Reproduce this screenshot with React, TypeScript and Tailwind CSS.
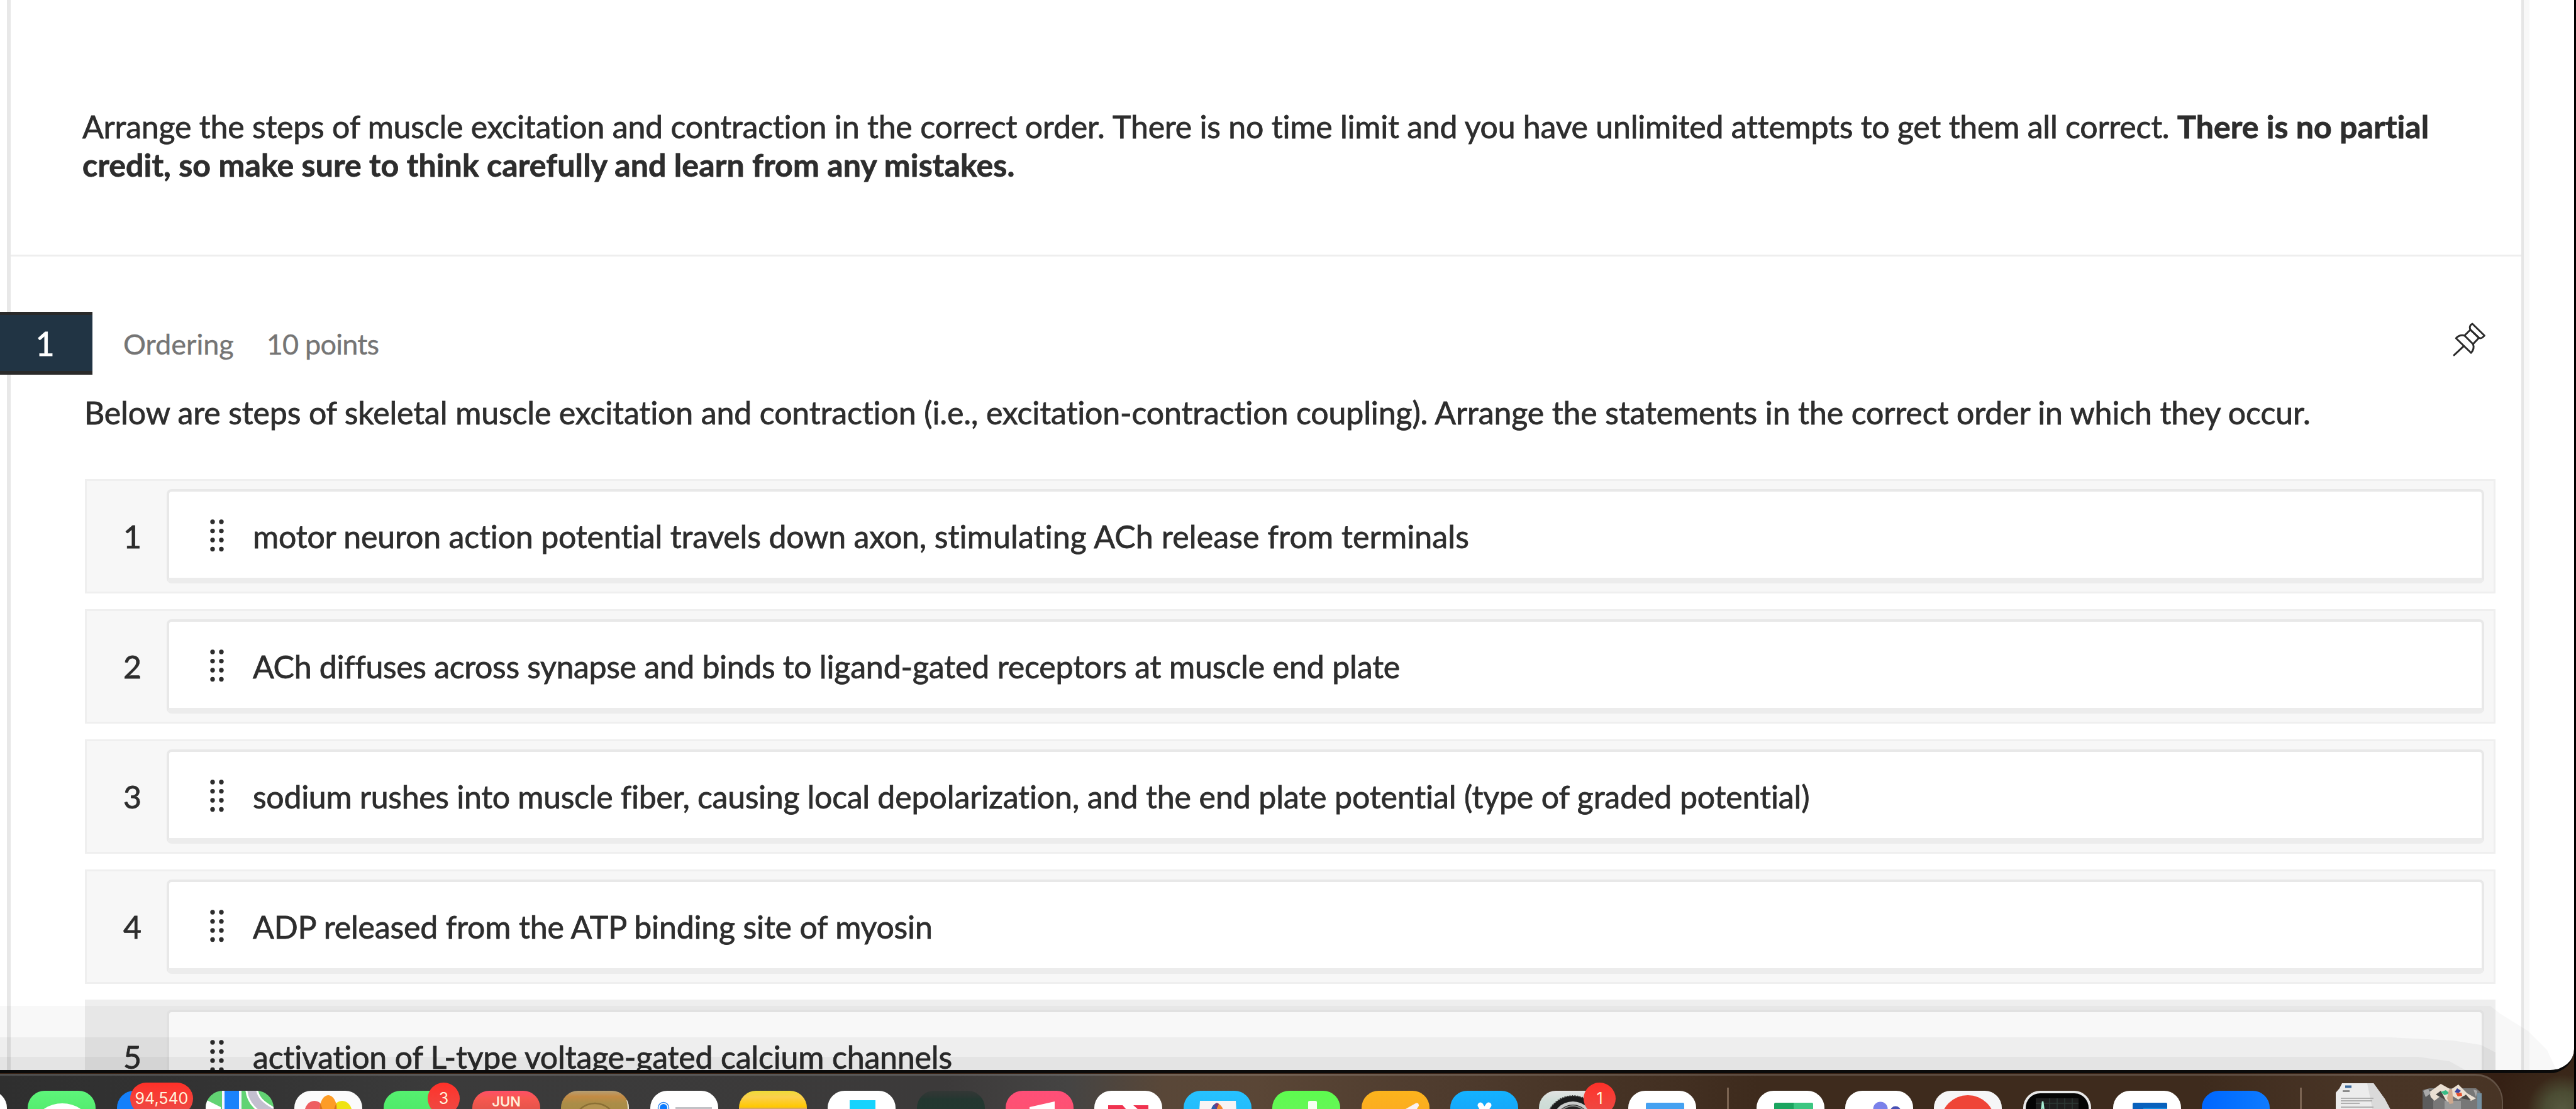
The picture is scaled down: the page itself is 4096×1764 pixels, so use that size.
import React from "react";

type Segment = { text: string; track: string };

const steps: Segment[][] = [
  [
    { text: "motor neuron action potential travels down axon, ", track: "tracking-[-0.150px]" },
    { text: "stimulating ACh release from terminals", track: "tracking-[0.140px]" },
  ],
  [
    { text: "ACh diffuses across synapse and binds to ", track: "tracking-[-0.330px]" },
    { text: "ligand-gated receptors at muscle end plate", track: "tracking-[-0.130px]" },
  ],
  [
    { text: "sodium rushes into muscle fiber, causing local ", track: "tracking-[-0.290px]" },
    { text: "depolarization, and the end plate potential (type of graded potential)", track: "tracking-[-0.100px]" },
  ],
  [{ text: "ADP released from the ATP binding site of myosin", track: "tracking-[-0.160px]" }],
  [{ text: "activation of L-type voltage-gated calcium channels", track: "tracking-[-0.150px]" }],
];

function DragHandle() {
  return (
    <svg width="22" height="52" viewBox="0 0 22 52" fill="#2d2d2d" className="block shrink-0">
      {[4, 18].map((x) => [4, 18.6, 33, 47.5].map((y) => <circle key={x + "-" + y} cx={x} cy={y} r="3.7" />))}
    </svg>
  );
}

function PinIcon() {
  return (
    <svg width="52" height="54" viewBox="0 0 50 52" fill="none" stroke="#2b2b2b" strokeWidth="2.8" strokeLinejoin="round" strokeLinecap="round">
      <path d="M2 50 L17 36" />
      <path d="M5 24 C10 19 14 19 18 20 L31 33 C33 38 32 42 28 46.500 Z" />
      <path d="M18 20 L27 11 L40 23.500 L31 33" />
      <path d="M27 11 C25 7 27 3 30 2 L48.500 20 C45 24 43 25 40 23.500 Z" />
    </svg>
  );
}

function Step({ n, segments }: { n: number; segments: Segment[] }) {
  const dim = n === 5;
  return (
    <div className={"flex h-[182px] shrink-0 border-[3px] pt-[13px] " + (dim ? "border-[#eeeeee] bg-[#eeeeee]" : "border-[#efefef] bg-[#f7f7f7]")}>
      <div className="flex h-[150px] w-[127px] items-center justify-center pl-[18px]">{n}</div>
      <div className="mr-[15px] flex h-[150px] flex-1 items-center rounded-[8px] border-[4px] border-b-[9px] border-[#e8e8e8] border-b-[#ececec] bg-white">
        <div className="ml-[65px] pt-[3px]"><DragHandle /></div>
        <div className="ml-[46px] pt-[5px] whitespace-pre">
          {segments.map((s) => <span key={s.text} className={s.track}>{s.text}</span>)}
        </div>
      </div>
    </div>
  );
}

type IconProps = { bg: string; gap?: string; children?: React.ReactNode };

function DockIcon({ bg, gap = "mr-[33.350px]", children }: IconProps) {
  return (
    <div className={"mt-[24px] h-[108px] w-[108px] shrink-0 overflow-hidden rounded-[27px] " + bg + " " + gap}>
      <svg width="108" height="108" viewBox="0 0 108 108" className="block">{children}</svg>
    </div>
  );
}

function Badge({ children, place }: { children: React.ReactNode; place: string }) {
  return (
    <div className={"absolute top-[11px] flex h-[51px] items-center justify-center rounded-full bg-gradient-to-b from-[#ff3028] to-[#ec4a45] font-['Inter',sans-serif] text-[25px] leading-none text-[#fff3dc] " + place}>
      {children}
    </div>
  );
}

function Dock() {
  return (
    <div className="relative mt-px flex h-[140px] w-[3980px] items-start overflow-hidden rounded-tr-[44px] border-t-[3px] border-r-[2px] border-white/15 bg-[linear-gradient(90deg,#2f2f2f_0px,#343434_400px,#3b3b3b_700px,#3c3a3a_1500px,#454443_1700px,#594738_1850px,#5a4636_2000px,#503d2f_2250px,#483527_2500px,#3e2b1d_2800px,#3e2b1d_3500px,#493526_3750px,#483425_3980px)] bg-origin-border">
      <div className="-ml-[97px] flex shrink-0 items-start">
        <DockIcon bg="bg-white" />
        <DockIcon bg="bg-gradient-to-b from-[#5df57a] to-[#40d855]">
          <ellipse cx="55" cy="48" rx="40" ry="28" fill="#fff" />
        </DockIcon>
        <DockIcon bg="bg-[#1480fb]" />
        <DockIcon bg="bg-[#62d373]">
          <path d="M0 14 L24 26 V108 H0 Z" fill="#fff" />
          <path d="M26 0 H57 V108 H26 Z" fill="#f4f4ff" />
          <path d="M30 0 H53 V108 H30 Z" fill="#1a82fb" />
          <path d="M73 -4 C74 16 88 26 106 36" stroke="#fff" strokeWidth="20" fill="none" />
          <path d="M73 -4 C74 16 88 26 106 36" stroke="#c3bfcf" strokeWidth="14" fill="none" />
        </DockIcon>
        <DockIcon bg="bg-[#fbfbfb]">
          <ellipse cx="32" cy="36" rx="16" ry="20" fill="#ee5e62" />
          <ellipse cx="76" cy="36" rx="16" ry="20" fill="#efe312" />
          <ellipse cx="54" cy="29" rx="13.500" ry="22" fill="#fd9c26" />
          <path d="M41 20 Q44 25 45 31 H41 Z M67 20 Q64 25 63 31 H67 Z" fill="#d9731e" />
        </DockIcon>
        <DockIcon bg="bg-gradient-to-b from-[#55f070] to-[#3fdd58]" />
        <div className="mt-[24px] mr-[33.350px] flex h-[108px] w-[108px] shrink-0 justify-center rounded-[27px] bg-[linear-gradient(#ff4f68_0px,#f75850_12px,#e5544a_30px)] pt-[7px] font-['Inter',sans-serif] text-[22px] leading-[21px] font-semibold text-[#fff0da]">JUN</div>
        <DockIcon bg="bg-[linear-gradient(#b5a076_0px,#c48b44_9px,#aa8d48_20px,#a98b45_30px)]">
          <circle cx="54" cy="54" r="34" fill="#b39350" stroke="#8a6f34" strokeWidth="2.500" />
          <path d="M106 14 Q108 20 108 32" stroke="#e8e4d8" strokeWidth="4" fill="none" />
        </DockIcon>
        <DockIcon bg="bg-white">
          <circle cx="21" cy="27" r="8.500" fill="#fff" stroke="#2d86f0" strokeWidth="1.500" />
          <circle cx="21" cy="27" r="6" fill="#0a7bff" />
          <path d="M40 27.500 H98" stroke="#c2c2c6" strokeWidth="3" />
        </DockIcon>
        <DockIcon bg="bg-[linear-gradient(#eedb36_0px,#fbd04e_10px,#ffc800_26px,#d9a763_28px)]" />
        <DockIcon bg="bg-white">
          <path d="M35 15 H76 V108 H35 Z" fill="#16d3fd" />
        </DockIcon>
        <DockIcon bg="bg-[linear-gradient(#323735_0px,#2a3632_8px,#20372f_14px,#20372f_40px)] opacity-90" />
        <DockIcon bg="bg-gradient-to-b from-[#ff4f78] to-[#fa5560]">
          <path d="M38 26 L78 17 V108 H70 V40 L46 46 V108 H38 Z" fill="#fff" />
        </DockIcon>
        <DockIcon bg="bg-white">
          <path d="M22 23 H45 L86 70 V86 H62 L22 40 Z" fill="#f0324f" />
          <path d="M62 23 H86 V44 L70 30 Z" fill="#f0324f" />
        </DockIcon>
        <DockIcon bg="bg-gradient-to-b from-[#27c2ff] to-[#1aaef5]">
          <path d="M26 16 H83 L88 108 H20 Z" fill="#f7f4f4" />
          <path d="M44 31 Q44 23 53 19 V40 Z" fill="#2d5fae" />
          <path d="M53 19 Q63 24 63 33 L53 40 Z" fill="#f2892d" />
          <path d="M49 22 Q53 18 56 21 L52 30 Z" fill="#7a3a78" />
        </DockIcon>
        <DockIcon bg="bg-gradient-to-b from-[#5dfb4f] to-[#74ee64]">
          <path d="M57 108 V18 Q57 16 60 16 H68 Q71 16 71 18 V108 Z" fill="#f6fff2" />
        </DockIcon>
        <DockIcon bg="bg-gradient-to-b from-[#fcb41c] to-[#fb9a28]">
          <path d="M60 44 L70 29 L84 21 Q91 17 91 24 L86 32 L72 48 Z" fill="#f8f2f4" />
        </DockIcon>
        <DockIcon bg="bg-gradient-to-b from-[#14b2ff] to-[#1a90ee]">
          <path d="M48 23 L54 33 L61 23" stroke="#fff" strokeWidth="9" strokeLinecap="round" strokeLinejoin="round" fill="none" />
        </DockIcon>
        <DockIcon bg="bg-[linear-gradient(#e3e3e3_0px,#d2ded9_14px,#c8d8d2_40px)]">
          <circle cx="54" cy="50" r="42" fill="#1c1c1c" stroke="#3a3a3a" strokeWidth="2" strokeDasharray="2 2" />
          <circle cx="54" cy="50" r="33" fill="#c9cbca" />
          <circle cx="54" cy="50" r="28" fill="#262626" />
          <path d="M30 36 Q54 12 78 36" stroke="#8a8d8b" strokeWidth="2" fill="none" />
        </DockIcon>
        <DockIcon bg="bg-white" gap="mr-[49px]">
          <path d="M28 21 Q28 19 30 19 H87 Q89 19 89 21 V108 H28 Z" fill="#45a1f1" />
        </DockIcon>
        <div className="mt-[19px] mr-[44px] h-[60px] w-[3px] shrink-0 bg-[#7a6351]" />
        <DockIcon bg="bg-white">
          <path d="M28 21 Q28 19 30 19 H59 V108 H28 Z" fill="#1ba45f" />
          <path d="M59 19 H88 Q90 19 90 21 V108 H59 Z" fill="#3cc681" />
        </DockIcon>
        <DockIcon bg="bg-white">
          <circle cx="56" cy="29" r="11.500" fill="#7b81ea" />
          <circle cx="80" cy="33" r="8.500" fill="#4850b4" />
        </DockIcon>
        <DockIcon bg="bg-[#f6f6f7]">
          <circle cx="54" cy="50" r="43" fill="#ef4537" />
        </DockIcon>
        <DockIcon bg="bg-[#e9e9e9]" gap="mr-[35.500px]">
          <rect x="4" y="4" width="100" height="100" rx="23" fill="#050505" />
          <path d="M20 12 H88 V96 H20 Z" fill="#1e1e1e" />
          <path d="M20 20 H88 M42 12 V50 M54 12 V50 M66 12 V50 M78 12 V50" stroke="#2e3a36" strokeWidth="1.500" />
          <path d="M28 40 L31 17 L34 40" stroke="#a6ecd2" strokeWidth="2.500" fill="none" />
        </DockIcon>
        <DockIcon bg="bg-white">
          <path d="M31 21 Q31 19 33 19 H84 Q86 19 86 21 V108 H31 Z" fill="#0961bd" />
          <path d="M48 27 H86 V108 H48 Z" fill="#168be0" />
          <path d="M60 29 H86 V40 H60 Z" fill="#35b2f2" />
        </DockIcon>
        <DockIcon bg="bg-gradient-to-r from-[#0066ff] to-[#0e7bff]" gap="mr-[48px]" />
        <div className="mt-[19px] mr-[54px] h-[60px] w-[3px] shrink-0 bg-[#7a6351]" />
        <svg width="88" height="60" viewBox="0 0 88 60" className="mt-[12px] mr-[49px] block shrink-0">
          <path d="M10 0 H60 L78 25 L87 42 V60 H0 V15 L6 8 Z" fill="#ececec" />
          <path d="M50 0 H60 L78 25 L87 42 V60 H62 Z" fill="#dadada" />
          <path d="M15 5.500 H25" stroke="#3c6a9c" strokeWidth="4" />
          <path d="M11 12.500 H22" stroke="#777" strokeWidth="2.500" />
          <path d="M8 24 H60 M8 28 H58 M8 32 H38 M8 38 H60" stroke="#b0b0b0" strokeWidth="1.800" />
        </svg>
        <svg width="98" height="60" viewBox="0 0 98 60" className="mt-[12px] block shrink-0">
          <path d="M1 11 L12 8 H86 L93 14 V60 H1 Z" fill="#777" />
          <path d="M1 11 H18 V60 H1 Z" fill="#5c5c5c" />
          <path d="M36 28 H62 V60 H36 Z" fill="#999" />
          <path d="M88 16 H95 V60 H88 Z" fill="#7590a0" />
          <path d="M12 14 L30 1 L46 10 L58 2 L72 16 L86 24 L78 28 L66 20 L58 26 L48 20 L42 30 L30 20 L20 28 L14 22 Z" fill="#eadfd2" />
          <path d="M22 18 L30 12 L38 27 Z M62 24 L70 18 L78 27 Z" fill="#4a4744" />
          <path d="M30 14 L38 11 L44 16 L36 19 Z" fill="#38bd87" />
          <path d="M56 8 L62 12 L58 16 L52 14 Z" fill="#3d459c" />
          <path d="M54 16 L63 15 L64 20 L57 21 Z" fill="#e2502d" />
          <path d="M43 10 L48 9 L50 32 L44 33 L40 24 Z" fill="#cfa98e" />
          <path d="M2 12 L10 9 L14 16 L6 22 Z M82 10 L88 12 L86 22 Z" fill="#a9a9a9" />
        </svg>
      </div>
      <Badge place="left-[207px] w-[100px]">94,540</Badge>
      <Badge place="left-[680px] w-[51px]">3</Badge>
      <Badge place="left-[2518px] w-[51px]">1</Badge>
    </div>
  );
}

function DockShade() {
  return (
    <div className="pointer-events-none absolute inset-x-0 bottom-0 h-[114px]">
      <div className="absolute bottom-0 left-0 h-[102px] w-[4065px] bg-black/[0.028] [clip-path:polygon(0_0,3960px_0,3975px_12px,4020px_40px,4050px_70px,4065px_102px,0_102px)]" />
      <div className="absolute bottom-0 left-0 h-[52px] w-[3970px] bg-black/[0.04] [clip-path:polygon(0_0,3800px_0,3900px_5px,3945px_12px,3968px_24px,3968px_52px,0_52px)]" />
      <div className="absolute bottom-0 left-0 h-[21px] w-[3968px] bg-black/[0.04] [clip-path:polygon(0_0,3845px_0,3895px_7px,3920px_21px,0_21px)]" />
    </div>
  );
}

function App() {
  return (
    <div className="h-[1764px] w-[4096px] overflow-hidden border-r-[3px] border-black bg-[radial-gradient(circle_at_4075px_1765px,#575a40_0px,#4b4c33_28px,#3a2719_56px,#352014_110px)]">
      <div className="relative flex h-[1707px] w-[4093px] overflow-hidden rounded-br-[38px] border-b-[5px] border-[#0a0a0a] bg-white font-['Lato',sans-serif] text-[50px] leading-[60px] text-[#2d2d2d] [font-variant-ligatures:none] [-webkit-text-stroke:0.800px_currentColor]">
        <div className="w-[11px] shrink-0" />
        <div className="w-[6px] shrink-0 bg-[#e8e8e8]" />
        <div className="w-[3992px] shrink-0">
          <p className="h-[405px] pt-[171px] pl-[114px] leading-[61px] whitespace-nowrap">
            <span className="tracking-[-0.200px]">Arrange the steps of muscle excitation and contraction in the correct order. </span>
            <span className="tracking-[-0.220px]">There is no time limit and you have unlimited attempts to get them all correct. </span>
            <b className="font-bold tracking-[0.080px]">There is no partial</b>
            <br />
            <b className="font-bold tracking-[0.120px]">credit, so make sure to think carefully and learn from any mistakes.</b>
          </p>
          <div className="h-[3px] bg-[#eeeeee]" />
          <div className="mt-[88px] flex h-[100px] items-center">
            <div className="-ml-[17px] flex h-[100px] w-[147px] shrink-0 items-center justify-center border-t-[5px] border-b-[6px] border-[#2a2a2a] bg-[#213444] text-[52px] text-white">
              <span className="mr-[4px]">1</span>
            </div>
            <div className="ml-[49px] flex gap-[52px] pt-[1px] text-[45px] text-[#757575] [-webkit-text-stroke:0.400px_currentColor]">
              <span>Ordering</span>
              <span className="tracking-[-0.800px]">10 points</span>
            </div>
            <div className="mr-[57px] mb-[13px] ml-auto"><PinIcon /></div>
          </div>
          <p className="h-[166px] pt-[30px] pl-[117px] tracking-[-0.115px] whitespace-nowrap">
            Below are steps of skeletal muscle excitation and contraction (i.e., excitation-contraction coupling). Arrange the statements in the correct order in which they occur.
          </p>
          <div className="ml-[118px] flex w-[3833px] flex-col gap-[25px]">
            {steps.map((segments, i) => <Step key={i} n={i + 1} segments={segments} />)}
          </div>
        </div>
        <div className="w-[4px] shrink-0 bg-[#e6e6e6]" />
        <div className="w-[9px] shrink-0 bg-[#f8f8f8]" />
        <DockShade />
      </div>
      <Dock />
    </div>
  );
}
export default App;
